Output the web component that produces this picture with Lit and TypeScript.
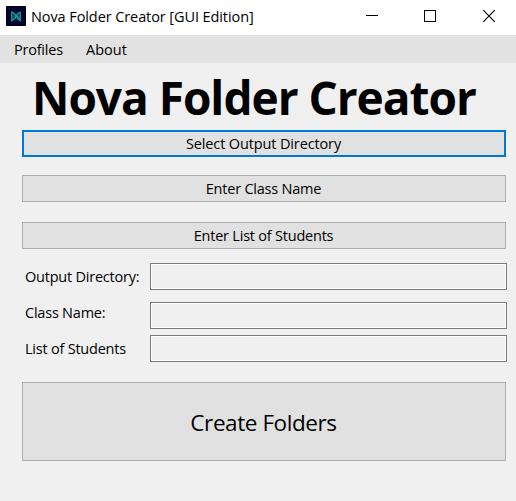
import { LitElement, html, css } from "lit";
import { customElement } from "lit/decorators.js";

@customElement("app-root")
export class AppRoot extends LitElement {
  static styles = css`
    :host { display: block; width: 516px; height: 501px; overflow: hidden; background: #f0f0f0; color: #000;
      font: 14.5px/20px "Open Sans", "Noto Sans", sans-serif; letter-spacing: -0.22px; white-space: nowrap; }
    * { box-sizing: border-box; }
    header { display: flex; height: 35px; background: #fff; }
    .logo { margin: 6px 0 0 6px; width: 20px; height: 20px; flex: none; }
    .caption { margin: 7px 0 0 5px; flex: 1; letter-spacing: -0.09px; }
    .controls { display: flex; flex: none; width: 173px; }
    .controls svg { width: 58px; height: 35px; flex: none; }
    nav { display: flex; height: 28px; background: #e2e2e2; padding: 5px 0 0 14px; }
    .profiles { width: 72px; }
    .about { letter-spacing: 0; }
    h1 { margin: 0; height: 67px; padding: 2px 0 0 32px; font-size: 46px; line-height: 64px; font-weight: 700; letter-spacing: -1.02px; }
    main { padding: 0 9px 0 22px; display: flex; flex-direction: column; }
    button { display: block; width: 484px; height: 27px; margin: 0; padding: 0 1px 0 0; border: 1px solid #adadad;
      background: #e1e1e1; color: #000; font: inherit; letter-spacing: inherit; text-align: center; border-radius: 0; }
    .focused { border: 2px solid #0078d7; letter-spacing: -0.13px; }
    .second { margin-top: 18px; }
    .third { margin-top: 20px; }
    .row { display: flex; height: 27px; padding-left: 3px; }
    .row label { width: 125px; padding-top: 4px; }
    .row input { width: 357px; height: 27px; margin: 0; border: 1px solid #7a7a7a; box-shadow: inset 0 0 0 1px #fff;
      background: #f0f0f0; border-radius: 0; padding: 2px; }
    .out { margin-top: 14px; }
    .cls { margin-top: 12px; }
    .cls label { padding-top: 1px; }
    .list { margin-top: 6px; }
    .create { margin-top: 20px; height: 79px; font-size: 22.5px; letter-spacing: -0.42px; padding-top: 3px; }
  `;

  render() {
    return html`
      <header>
        <svg class="logo" viewBox="0 0 20 20">
          <rect width="20" height="20" rx="1" fill="#02052b" />
          <path d="M5 5.5L10 8.5L15 5.5V15L10 12L5 15Z" fill="#0a4560" />
          <path d="M5.8 5.8V14.8L9.4 12V8.6L5.8 5.8M14.2 5.8V14.8L10.8 12M9.4 8.6L14.2 13.2M14.2 5.8L10.8 8.6L9.4 12" fill="none" stroke="#15a0a2" stroke-width="1.1" />
        </svg>
        <span class="caption">Nova Folder Creator [GUI Edition]</span>
        <div class="controls">
          <svg viewBox="0 0 58 35" shape-rendering="crispEdges"><path d="M23 15.5H35" stroke="#000" /></svg>
          <svg viewBox="0 0 58 35" shape-rendering="crispEdges"><rect x="23.5" y="10.5" width="11" height="11" fill="none" stroke="#000" /></svg>
          <svg viewBox="0 0 58 35"><path d="M24.2 10.2L35.8 21.8M35.8 10.2L24.2 21.8" stroke="#000" stroke-width="1.1" /></svg>
        </div>
      </header>
      <nav><span class="profiles">Profiles</span><span class="about">About</span></nav>
      <h1>Nova Folder Creator</h1>
      <main>
        <button class="focused">Select Output Directory</button>
        <button class="second">Enter Class Name</button>
        <button class="third">Enter List of Students</button>
        <div class="row out"><label>Output Directory:</label><input readonly /></div>
        <div class="row cls"><label>Class Name:</label><input readonly /></div>
        <div class="row list"><label>List of Students</label><input readonly /></div>
        <button class="create">Create Folders</button>
      </main>
    `;
  }
}
